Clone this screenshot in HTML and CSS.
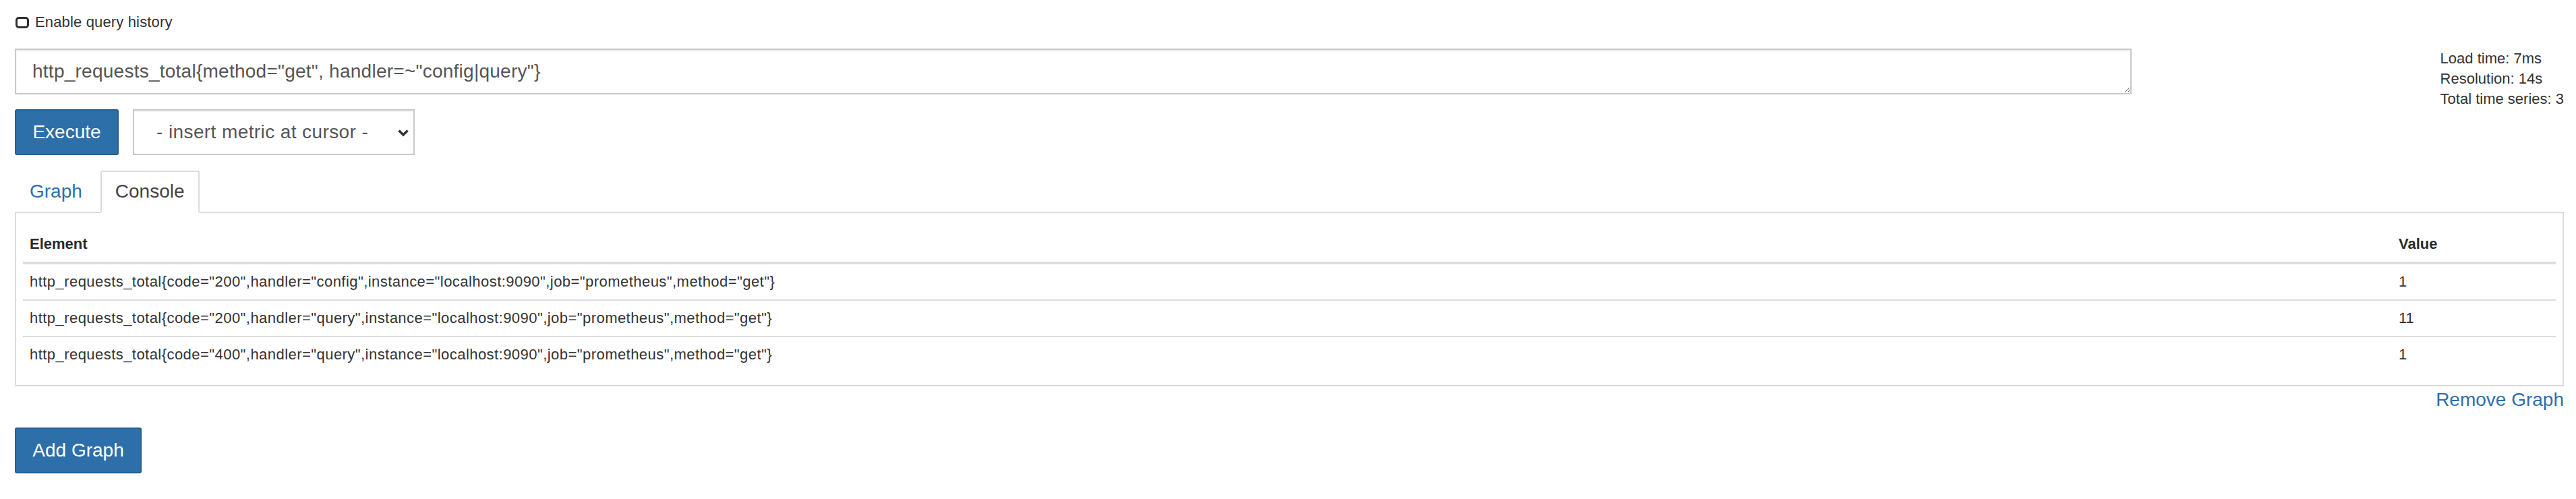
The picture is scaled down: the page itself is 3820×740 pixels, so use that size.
FILE: index.html
```html
<!DOCTYPE html>
<html lang="en">
<head>
<meta charset="utf-8">
<title>Prometheus Time Series Collection and Processing Server</title>
<link rel="stylesheet" href="styles.css">
</head>
<body>
<div class="page">
  <label class="history"><input type="checkbox" class="check"><span>Enable query history</span></label>

  <div class="query-row">
    <textarea class="expr" spellcheck="false">http_requests_total{method="get", handler=~"config|query"}</textarea>
    <div class="stats">
      <div>Load time: 7ms</div>
      <div>Resolution: 14s</div>
      <div>Total time series: 3</div>
    </div>
  </div>

  <div class="controls">
    <button class="btn">Execute</button>
    <div class="select-wrap">
      <select class="metric"><option>- insert metric at cursor -</option></select>
      <svg class="chev" width="18" height="12" viewBox="0 0 18 12"><polyline points="2.5,2.5 9,9 15.5,2.5" fill="none" stroke="#333" stroke-width="3.6" stroke-linejoin="miter"/></svg>
    </div>
  </div>

  <ul class="tabs">
    <li><a class="tab">Graph</a></li>
    <li><a class="tab active">Console</a></li>
  </ul>

  <div class="panel">
    <table class="console">
      <thead>
        <tr><th>Element</th><th class="val">Value</th></tr>
      </thead>
      <tbody>
        <tr><td class="series">http_requests_total{code="200",handler="config",instance="localhost:9090",job="prometheus",method="get"}</td><td>1</td></tr>
        <tr><td class="series">http_requests_total{code="200",handler="query",instance="localhost:9090",job="prometheus",method="get"}</td><td>11</td></tr>
        <tr><td class="series">http_requests_total{code="400",handler="query",instance="localhost:9090",job="prometheus",method="get"}</td><td>1</td></tr>
      </tbody>
    </table>
  </div>

  <div class="remove"><a>Remove Graph</a></div>

  <button class="btn add">Add Graph</button>
</div>
</body>
</html>
```

FILE: styles.css
```css
html, body {
  margin: 0;
  padding: 0;
  background: #fff;
}

body {
  font-family: "Liberation Sans", Arial, Helvetica, sans-serif;
  color: #333;
  font-size: 28px;
  line-height: 40px;
}

.page {
  padding: 18px 18px 0 22px;
}

/* query history toggle */
.history {
  display: flex;
  align-items: center;
  gap: 9px;
  height: 30px;
  font-size: 22px;
  line-height: 30px;
  letter-spacing: 0.15px;
  color: #333;
}

.check {
  appearance: none;
  -webkit-appearance: none;
  box-sizing: border-box;
  width: 20px;
  height: 17px;
  margin: 1px 0 0 1px;
  border: 3px solid #2e2e2e;
  border-radius: 5px;
  background: #fff;
}

/* expression row */
.query-row {
  display: flex;
  justify-content: space-between;
  align-items: flex-start;
  margin-top: 24px;
}

.expr {
  box-sizing: border-box;
  width: 3139px;
  height: 68px;
  margin: 0;
  padding: 12px 24px;
  border: 2px solid #c8c8c8;
  border-radius: 0;
  box-shadow: inset 0 2px 2px rgba(0, 0, 0, 0.075);
  font-family: inherit;
  font-size: 28px;
  line-height: 40px;
  letter-spacing: 0.25px;
  color: #555;
  background: #fff;
  outline: none;
}

.stats {
  font-size: 22px;
  line-height: 30px;
  color: #333;
}

/* execute + metric select */
.controls {
  display: flex;
  gap: 21px;
}

.btn {
  box-sizing: border-box;
  height: 68px;
  margin: 0;
  padding: 12px 24px;
  border: 2px solid #275f91;
  border-radius: 3px;
  background: #2d6fa9;
  color: #fff;
  font-family: inherit;
  font-size: 28px;
  line-height: 40px;
}

.controls .btn {
  width: 154px;
}

.select-wrap {
  position: relative;
  width: 418px;
}

.metric {
  appearance: none;
  -webkit-appearance: none;
  box-sizing: border-box;
  width: 100%;
  height: 68px;
  margin: 0;
  padding: 12px 40px 12px 33px;
  border: 2px solid #c8c8c8;
  border-radius: 0;
  background: #fff;
  box-shadow: inset 0 2px 2px rgba(0, 0, 0, 0.05);
  font-family: inherit;
  font-size: 28px;
  line-height: 40px;
  letter-spacing: 0.4px;
  color: #555;
}

.chev {
  position: absolute;
  right: 8px;
  top: 29px;
  pointer-events: none;
}

/* tabs */
.tabs {
  display: flex;
  list-style: none;
  margin: 23px 0 0;
  padding: 0;
  border-bottom: 2px solid #dcdcdc;
}

.tabs li {
  margin: 0 5px -2px 0;
}

.tab {
  display: block;
  padding: 8px 20px 9px;
  border: 2px solid transparent;
  border-radius: 3px 3px 0 0;
  font-size: 28px;
  line-height: 42px;
  color: #2d6fac;
}

.tab.active {
  color: #444;
  background: #fff;
  border-color: #dcdcdc;
  border-bottom-color: #fff;
}

/* console table panel */
.panel {
  border: 2px solid #dcdcdc;
  border-top: 0;
  padding: 20px 10px 19px;
}

.console {
  width: 100%;
  border-collapse: separate;
  border-spacing: 0;
  font-size: 22px;
  line-height: 32px;
  color: #333;
}

.console th {
  text-align: left;
  font-weight: bold;
  color: #2a2a2a;
  padding: 10px;
  border-bottom: 4px solid #dcdcdc;
}

.console th.val {
  width: 223px;
}

.console td {
  padding: 10px;
  vertical-align: top;
}

.console td.series {
  letter-spacing: 0.45px;
}

.console tbody tr + tr td {
  border-top: 2px solid #dcdcdc;
}

/* footer actions */
.remove {
  text-align: right;
  font-size: 28px;
  line-height: 40px;
}

.remove a {
  color: #2d6fac;
}

.add {
  display: block;
  width: 188px;
  margin-top: 21px;
}
```
